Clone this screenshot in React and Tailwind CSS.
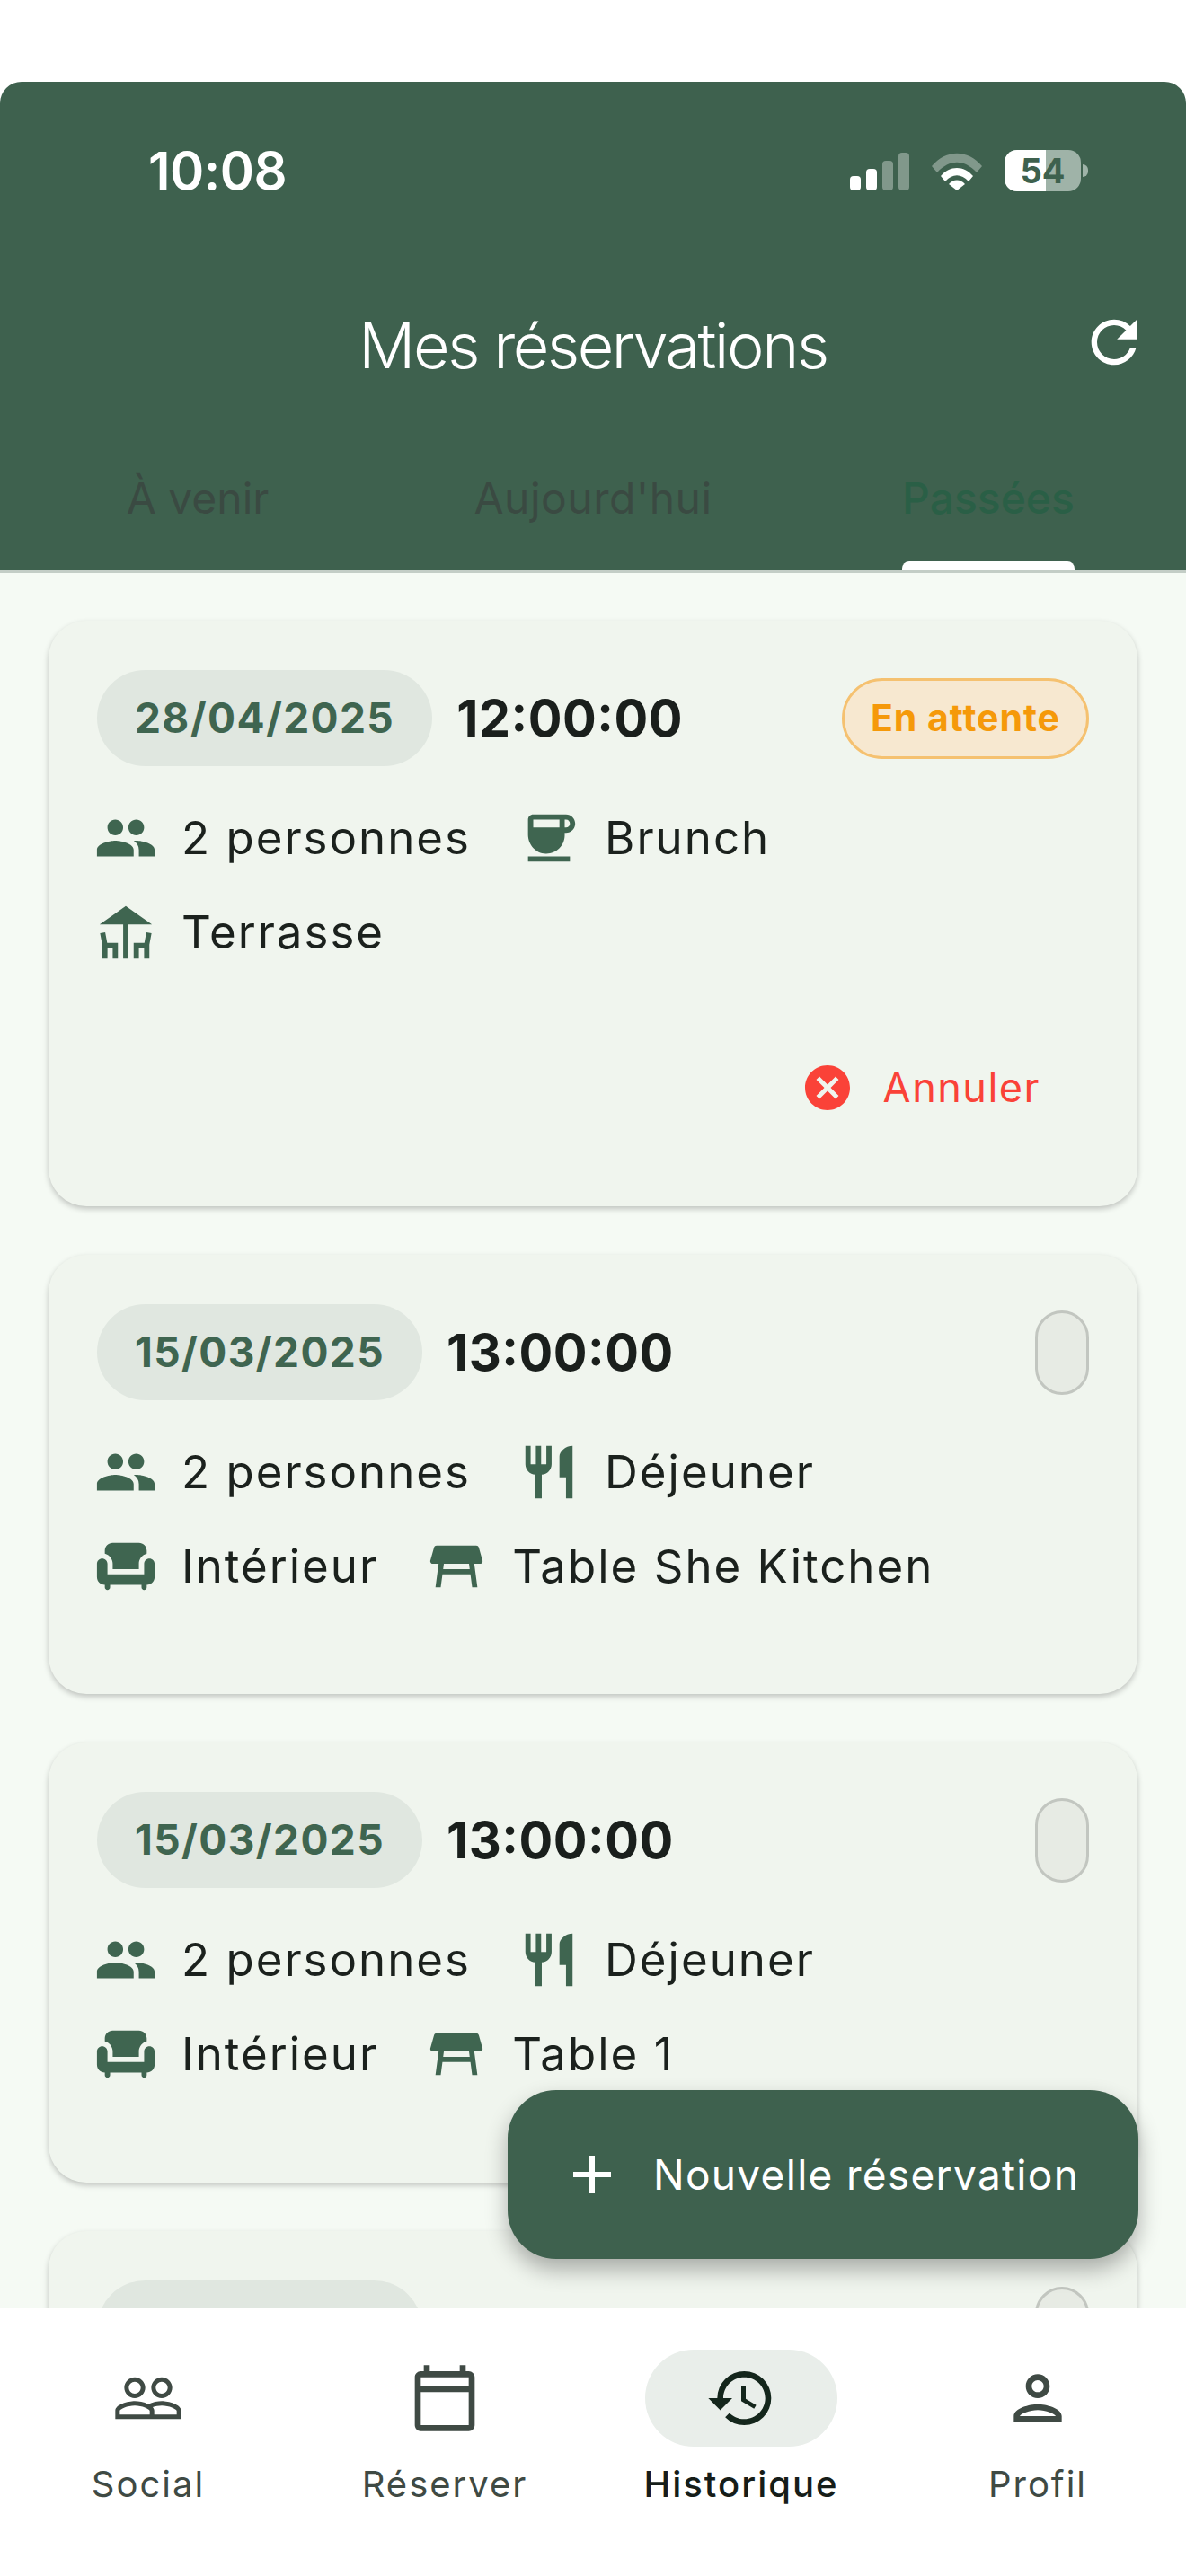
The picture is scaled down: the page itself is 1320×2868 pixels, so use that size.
import React from 'react';
import {
  MdPeople, MdCoffee, MdDeck, MdChair, MdTableRestaurant, MdRestaurant, MdRefresh, MdCancel, MdAdd,
  MdPeopleOutline, MdOutlineCalendarToday, MdHistory, MdOutlinePerson,
} from 'react-icons/md';

const Meta = ({ icon: Icon, label }) => (
  <div className="flex items-center gap-[30px]">
    <Icon className="w-[70px] h-[70px] text-[#3f6550] -mx-[3px]" />
    <span className="text-[51px] leading-[70px] tracking-[2px] text-[#1b211d]">{label}</span>
  </div>
);

const Card = ({ date, time, status, rows, cancel, className }) => (
  <div className={`bg-[#f0f5ee] rounded-[42px] shadow-[0_3px_6px_rgba(0,0,0,0.22)] px-[54px] pt-[55px] shrink-0 ${className}`}>
    <div className="flex items-center">
      <div className="h-[107px] px-[42px] rounded-[54px] bg-[#e0e7e0] flex items-center text-[46px] font-bold tracking-[1.4px] text-[#3f6550]">
        {date}
      </div>
      <div className="ml-[27px] text-[56px] font-bold tracking-[0.5px] text-[#1a1f1c] [font-feature-settings:'case']">{time}</div>
      <div className="ml-auto">
        {status ? (
          <div className="h-[90px] px-[29px] rounded-[45px] bg-[#f7e8d0] border-[3px] border-[#f5c170] flex items-center text-[41px] font-bold tracking-[1px] text-[#f5990a]">
            {status}
          </div>
        ) : (
          <div className="w-[60px] h-[94px] rounded-[30px] bg-[#e7ebe4] border-[3px] border-[#c2c6c0]" />
        )}
      </div>
    </div>
    <div className="mt-[45px] flex flex-col gap-[35px]">
      {rows.map((row, i) => (
        <div key={i} className="flex items-center gap-[55px]">
          {row.map((m) => <Meta key={m.label} icon={m.icon} label={m.label} />)}
        </div>
      ))}
    </div>
    {cancel && (
      <div className="mt-[104px] pr-[54px] flex items-center justify-end gap-[32px] text-[#fa4238]">
        <MdCancel className="w-[60px] h-[60px]" />
        <span className="text-[45px] tracking-[1.5px]">Annuler</span>
      </div>
    )}
  </div>
);

const NavItem = ({ icon: Icon, label, active }) => (
  <div className="flex flex-col items-center">
    <div className={`w-[214px] h-[108px] rounded-[54px] flex items-center justify-center ${active ? 'bg-[#e9eeea]' : ''}`}>
      <Icon className={`w-[80px] h-[80px] ${active ? 'text-[#14261c]' : 'text-[#3f4a44]'}`} />
    </div>
    <span className={`mt-[12px] text-[40px] tracking-[2px] ${active ? 'font-medium text-[#161d19]' : 'text-[#3f4a44]'}`}>{label}</span>
  </div>
);

const StatusIcons = () => (
  <div className="flex items-center">
    <svg width="66" height="42" viewBox="0 0 66 42" className="mt-[2px]">
      <rect x="0" y="26" width="12" height="16" rx="4" fill="#fff" />
      <rect x="18" y="18" width="12" height="24" rx="4" fill="#fff" />
      <rect x="36" y="9" width="12" height="33" rx="4" fill="#fff" fillOpacity="0.35" />
      <rect x="54" y="0" width="12" height="42" rx="4" fill="#fff" fillOpacity="0.35" />
    </svg>
    <svg width="56" height="42" viewBox="0 0 56 42" className="ml-[25px] mt-[2px]">
      <path d="M0 15 C16 -4 40 -4 56 15 L50 22 C36 7 20 7 6 22 Z" fill="#fff" fillOpacity="0.35" />
      <path d="M10 26 C20 14 36 14 46 26 L41 32 C33 23 23 23 15 32 Z" fill="#fff" />
      <path d="M19 35 C24 29 32 29 37 35 L28 42 Z" fill="#fff" />
    </svg>
    <div className="ml-[25px] relative w-[85px] h-[46px] rounded-[14px] bg-[#9fb3a8] overflow-hidden">
      <div className="absolute inset-y-0 left-0 w-[46px] bg-white" />
      <div className="absolute inset-0 flex items-center justify-center text-[38px] font-bold leading-none text-[#3e614e]">54</div>
    </div>
    <div className="ml-[2px] w-[6px] h-[14px] rounded-r-full bg-[#9fb3a8]" />
  </div>
);

export default function App() {
  return (
    <div className="relative w-[1320px] h-[2868px] overflow-hidden bg-white flex flex-col pt-[91px] font-['Inter',sans-serif]">
      {/* Header */}
      <div className="h-[544px] shrink-0 bg-[#3e614e] rounded-t-[24px] flex flex-col">
        <div className="h-[78px] mt-[60px] pl-[165px] pr-[109px] flex items-center justify-between">
          <span className="text-[58px] font-semibold tracking-[-0.5px] text-white">10:08</span>
          <StatusIcons />
        </div>
        <div className="relative mt-[115px] h-[80px] flex items-center justify-center">
          <span className="text-[70px] font-[350] tracking-[-2.4px] text-white">Mes réservations</span>
          <MdRefresh className="absolute right-[42px] -top-[1px] w-[76px] h-[76px] text-white" />
        </div>
        <div className="mt-auto grid grid-cols-3">
          <div className="flex justify-center"><span className="text-[48px] leading-[72px] pb-[44px] text-[#3a4a42]">À venir</span></div>
          <div className="flex justify-center"><span className="text-[48px] leading-[72px] pb-[44px] tracking-[0.5px] text-[#3a4a42]">Aujourd'hui</span></div>
          <div className="flex justify-center">
            <div className="flex flex-col">
              <span className="text-[48px] leading-[72px] pb-[34px] font-medium text-[#2a5f46]">Passées</span>
              <div className="h-[10px] bg-white rounded-t-[8px]" />
            </div>
          </div>
        </div>
      </div>
      <div className="h-[3px] shrink-0 bg-[#c3cdc6]" />

      {/* Reservations */}
      <div className="flex-1 overflow-hidden bg-[#f5faf4] px-[54px] pt-[53px] flex flex-col gap-[54px]">
        <Card
          date="28/04/2025"
          time="12:00:00"
          status="En attente"
          cancel
          className="h-[652px]"
          rows={[
            [{ icon: MdPeople, label: '2 personnes' }, { icon: MdCoffee, label: 'Brunch' }],
            [{ icon: MdDeck, label: 'Terrasse' }],
          ]}
        />
        <Card
          date="15/03/2025"
          time="13:00:00"
          className="h-[489px]"
          rows={[
            [{ icon: MdPeople, label: '2 personnes' }, { icon: MdRestaurant, label: 'Déjeuner' }],
            [{ icon: MdChair, label: 'Intérieur' }, { icon: MdTableRestaurant, label: 'Table She Kitchen' }],
          ]}
        />
        <Card
          date="15/03/2025"
          time="13:00:00"
          className="h-[490px]"
          rows={[
            [{ icon: MdPeople, label: '2 personnes' }, { icon: MdRestaurant, label: 'Déjeuner' }],
            [{ icon: MdChair, label: 'Intérieur' }, { icon: MdTableRestaurant, label: 'Table 1' }],
          ]}
        />
        <Card date="15/03/2025" time="13:00:00" className="h-[490px]" rows={[]} />
      </div>

      {/* Bottom nav */}
      <div className="h-[298px] shrink-0 bg-white relative z-10 grid grid-cols-4 pt-[46px] items-start">
        <NavItem icon={MdPeopleOutline} label="Social" />
        <NavItem icon={MdOutlineCalendarToday} label="Réserver" />
        <NavItem icon={MdHistory} label="Historique" active />
        <NavItem icon={MdOutlinePerson} label="Profil" />
      </div>

      {/* FAB */}
      <div className="absolute z-20 left-[565px] top-[2327px] w-[702px] h-[188px] rounded-[54px] bg-[#3e614e] shadow-[0_12px_24px_rgba(0,0,0,0.3)] flex items-center pl-[58px] gap-[32px] text-white">
        <MdAdd className="w-[72px] h-[72px]" />
        <span className="text-[46px] tracking-[1.3px]">Nouvelle réservation</span>
      </div>
    </div>
  );
}
